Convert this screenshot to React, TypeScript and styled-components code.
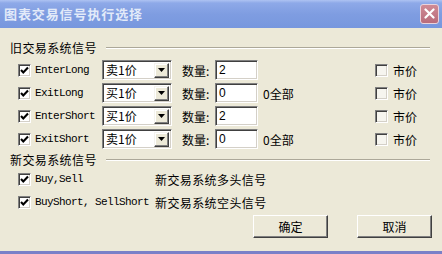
import styled, { createGlobalStyle } from 'styled-components';

const GlobalStyle = createGlobalStyle`
  html, body {
    margin: 0;
    padding: 0;
    background: #ece9d8;
  }
  body {
    font-family: "Noto Sans CJK SC", "Liberation Sans", sans-serif;
    font-size: 12px;
    color: #000;
  }
`;

const Window = styled.div`
  width: 442px;
  height: 254px;
  display: flex;
  flex-direction: column;
  background: #ece9d8;
  box-sizing: border-box;
  border-bottom: 3px solid #7a80c8;
`;

const TitleBar = styled.div`
  height: 28px;
  flex-shrink: 0;
  display: flex;
  align-items: center;
  justify-content: space-between;
  padding: 0 3px 0 4px;
  box-sizing: border-box;
  background: linear-gradient(to bottom, #aec3f2 0, #8ea9e8 3px, #7f9de1 50%, #7797de 100%);
`;

const Title = styled.span`
  font-size: 13px;
  font-weight: bold;
  color: #e2eaf9;
  letter-spacing: 0.9px;
  line-height: 28px;
`;

const CloseButton = styled.div`
  width: 19px;
  height: 20px;
  box-sizing: border-box;
  border: 1px solid #e9d3dc;
  border-radius: 3px;
  background: linear-gradient(to bottom, #cf8a95, #b96c7b);
  display: flex;
  align-items: center;
  justify-content: center;
  margin-top: -1px;
`;

const Body = styled.div`
  flex: 1;
  display: flex;
  flex-direction: column;
  padding: 13px 10px 0 10px;
`;

const GroupHeader = styled.div<{ top?: number }>`
  display: flex;
  align-items: center;
  height: 14px;
  margin-top: ${p => p.top ?? 0}px;
`;

const GroupLabel = styled.span`
  letter-spacing: 0.4px;
  line-height: 14px;
`;

const Etched = styled.div`
  flex: 1;
  height: 0;
  border-top: 1px solid #aca899;
  border-bottom: 1px solid #fff;
  margin: 0 2px 0 9px;
`;

const Rows = styled.div<{ top: number }>`
  display: flex;
  flex-direction: column;
  gap: 1px;
  margin-top: ${p => p.top}px;
  padding-left: 8px;
`;

const Row = styled.div`
  height: 22px;
  display: flex;
  align-items: center;
`;

const Box = styled.span<{ checked?: boolean }>`
  width: 13px;
  height: 13px;
  flex-shrink: 0;
  box-sizing: border-box;
  border-top: 1px solid #808080;
  border-left: 1px solid #808080;
  border-right: 1px solid #fff;
  border-bottom: 1px solid #fff;
  box-shadow: inset 1px 1px 0 #404040, inset -1px -1px 0 #d4d0c8;
  background: ${p => (p.checked ? '#fff' : '#f6f5ef')};
  display: flex;
  align-items: center;
  justify-content: center;
`;

const Code = styled.span<{ w: number }>`
  width: ${p => p.w}px;
  flex-shrink: 0;
  margin-left: 4px;
  font-family: "Liberation Mono", "DejaVu Sans Mono", monospace;
  font-size: 11px;
  letter-spacing: -0.6px;
  white-space: pre;
`;

const Combo = styled.div`
  width: 70px;
  height: 20px;
  flex-shrink: 0;
  box-sizing: border-box;
  background: #fff;
  border-top: 1px solid #808080;
  border-left: 1px solid #808080;
  border-right: 1px solid #fff;
  border-bottom: 1px solid #fff;
  box-shadow: inset 1px 1px 0 #404040, inset -1px -1px 0 #d4d0c8;
  display: flex;
  align-items: center;
  padding: 2px 2px 2px 3px;
`;

const ComboText = styled.span`
  flex: 1;
  line-height: 14px;
`;

const ComboArrow = styled.span`
  width: 15px;
  height: 15px;
  box-sizing: border-box;
  background: #ece9d8;
  border-top: 1px solid #f4f3ee;
  border-left: 1px solid #f4f3ee;
  border-right: 1px solid #404040;
  border-bottom: 1px solid #404040;
  box-shadow: inset -1px -1px 0 #808080, inset 1px 1px 0 #fff;
  display: flex;
  align-items: center;
  justify-content: center;
`;

const QtyLabel = styled.span`
  margin-left: 10px;
  width: 33px;
  flex-shrink: 0;
`;

const Input = styled.div`
  width: 43px;
  height: 20px;
  flex-shrink: 0;
  box-sizing: border-box;
  background: #fff;
  border-top: 1px solid #808080;
  border-left: 1px solid #808080;
  border-right: 1px solid #fff;
  border-bottom: 1px solid #fff;
  box-shadow: inset 1px 1px 0 #404040, inset -1px -1px 0 #d4d0c8;
  padding: 1px 0 0 3px;
  font-family: "Liberation Sans", sans-serif;
  font-size: 12px;
  line-height: 16px;
`;

const Hint = styled.span`
  width: 112px;
  margin-left: 5px;
  flex-shrink: 0;
`;

const Market = styled.span`
  margin-left: 5px;
`;

const Desc = styled.span`
  letter-spacing: 0.4px;
`;

const Buttons = styled.div`
  display: flex;
  justify-content: flex-end;
  gap: 29px;
  margin-top: 2px;
`;

const Button = styled.div`
  width: 75px;
  height: 23px;
  box-sizing: border-box;
  background: #ece9d8;
  border-top: 1px solid #fff;
  border-left: 1px solid #fff;
  border-right: 1px solid #404040;
  border-bottom: 1px solid #404040;
  box-shadow: inset -1px -1px 0 #808080;
  display: flex;
  align-items: center;
  justify-content: center;
`;

const Check = () => (
  <svg width="9" height="9" viewBox="0 0 9 9">
    <path d="M1 4 L3.3 6.5 L8 1.5" fill="none" stroke="#000" strokeWidth="2.1" />
  </svg>
);

const Arrow = () => (
  <svg width="7" height="4" viewBox="0 0 7 4">
    <path d="M0 0 H7 L3.5 4 Z" fill="#000" />
  </svg>
);

const CloseX = () => (
  <svg width="11" height="11" viewBox="0 0 11 11">
    <path d="M1.5 1.5 L9.5 9.5 M9.5 1.5 L1.5 9.5" stroke="#fff" strokeWidth="2.2" strokeLinecap="round" />
  </svg>
);

const oldSignals = [
  { name: 'EnterLong', price: '卖1价', qty: '2', hint: '' },
  { name: 'ExitLong', price: '买1价', qty: '0', hint: '0全部' },
  { name: 'EnterShort', price: '买1价', qty: '2', hint: '' },
  { name: 'ExitShort', price: '卖1价', qty: '0', hint: '0全部' },
];

const newSignals = [
  { name: 'Buy,Sell', desc: '新交易系统多头信号' },
  { name: 'BuyShort, SellShort', desc: '新交易系统空头信号' },
];

export default function App() {
  return (
    <>
      <GlobalStyle />
      <Window>
        <TitleBar>
          <Title>图表交易信号执行选择</Title>
          <CloseButton><CloseX /></CloseButton>
        </TitleBar>
        <Body>
          <GroupHeader>
            <GroupLabel>旧交易系统信号</GroupLabel>
            <Etched />
          </GroupHeader>
          <Rows top={4}>
            {oldSignals.map(s => (
              <Row key={s.name}>
                <Box checked><Check /></Box>
                <Code w={67}>{s.name}</Code>
                <Combo>
                  <ComboText>{s.price}</ComboText>
                  <ComboArrow><Arrow /></ComboArrow>
                </Combo>
                <QtyLabel>数量:</QtyLabel>
                <Input>{s.qty}</Input>
                <Hint>{s.hint}</Hint>
                <Box />
                <Market>市价</Market>
              </Row>
            ))}
          </Rows>
          <GroupHeader top={3}>
            <GroupLabel>新交易系统信号</GroupLabel>
            <Etched />
          </GroupHeader>
          <Rows top={1}>
            {newSignals.map(s => (
              <Row key={s.name}>
                <Box checked><Check /></Box>
                <Code w={120}>{s.name}</Code>
                <Desc>{s.desc}</Desc>
              </Row>
            ))}
          </Rows>
          <Buttons>
            <Button>确定</Button>
            <Button>取消</Button>
          </Buttons>
        </Body>
      </Window>
    </>
  );
}
